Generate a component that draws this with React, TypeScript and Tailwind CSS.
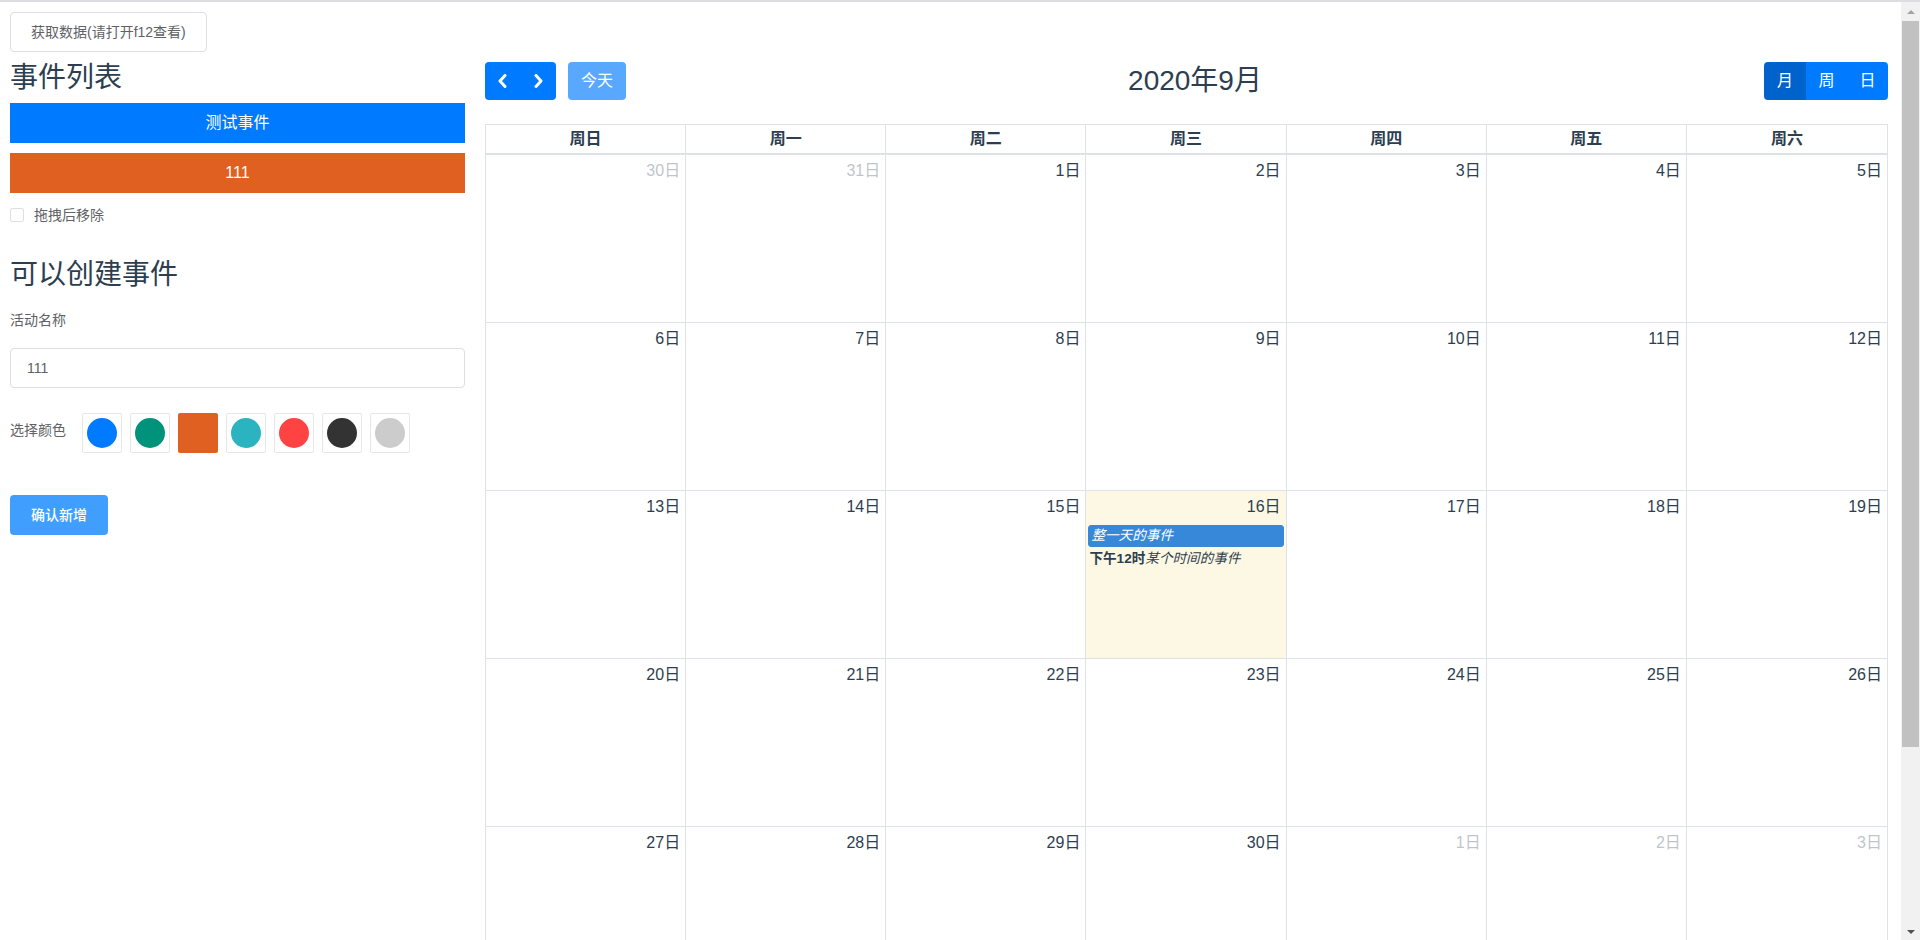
import React from "react";

type Day = { d: number; other?: boolean; today?: boolean };

const WEEKDAYS = ["周日", "周一", "周二", "周三", "周四", "周五", "周六"];

// 2020年9月 — only the weeks that fit on screen
const WEEKS: Day[][] = [
  [{ d: 30, other: true }, { d: 31, other: true }, { d: 1 }, { d: 2 }, { d: 3 }, { d: 4 }, { d: 5 }],
  [{ d: 6 }, { d: 7 }, { d: 8 }, { d: 9 }, { d: 10 }, { d: 11 }, { d: 12 }],
  [{ d: 13 }, { d: 14 }, { d: 15 }, { d: 16, today: true }, { d: 17 }, { d: 18 }, { d: 19 }],
  [{ d: 20 }, { d: 21 }, { d: 22 }, { d: 23 }, { d: 24 }, { d: 25 }, { d: 26 }],
  [{ d: 27 }, { d: 28 }, { d: 29 }, { d: 30 }, { d: 1, other: true }, { d: 2, other: true }, { d: 3, other: true }],
];

const SWATCHES = [
  { color: "#007bff" },
  { color: "#00927a" },
  { color: "#e06022", selected: true },
  { color: "#2bb3c0" },
  { color: "#ff4343" },
  { color: "#333333" },
  { color: "#cccccc" },
];

function Chevron({ dir }: { dir: "left" | "right" }) {
  return (
    <svg width="9" height="14" viewBox="0 0 9 14" fill="none">
      <polyline
        points={dir === "left" ? "7,1.5 2,7 7,12.5" : "2,1.5 7,7 2,12.5"}
        stroke="white"
        strokeWidth="3"
        strokeLinecap="round"
        strokeLinejoin="round"
      />
    </svg>
  );
}

function Sidebar() {
  return (
    <aside className="w-[455px] shrink-0">
      <h2 className="mt-[9px] mb-[8px] text-[28px] leading-[34px] font-normal">事件列表</h2>
      <div className="h-[40px] bg-[#007bff] text-center text-[16px] leading-[40px] text-white">测试事件</div>
      <div className="mt-[10px] h-[40px] bg-[#e06022] text-center text-[16px] leading-[40px] text-white">111</div>
      <label className="mt-[12px] flex h-[20px] items-center">
        <span className="h-[14px] w-[14px] rounded-[2px] border border-[#dcdfe6] bg-white" />
        <span className="ml-[10px] text-[14px] text-[#606266]">拖拽后移除</span>
      </label>

      <h2 className="mt-[33px] text-[28px] leading-[34px] font-normal">可以创建事件</h2>
      <div className="mt-[8px] h-[40px] text-[14px] leading-[40px] text-[#606266]">活动名称</div>
      <div className="mt-[8px] flex h-[40px] items-center rounded-[4px] border border-[#dcdfe6] px-[16px] text-[14px] text-[#606266]">
        111
      </div>

      <div className="mt-[25px] flex items-start">
        <span className="w-[72px] text-[14px] leading-[34px] text-[#606266]">选择颜色</span>
        <div className="flex gap-[8px]">
          {SWATCHES.map((s) =>
            s.selected ? (
              <div key={s.color} className="h-[40px] w-[40px] rounded-[2px]" style={{ backgroundColor: s.color }} />
            ) : (
              <div
                key={s.color}
                className="flex h-[40px] w-[40px] items-center justify-center rounded-[2px] border border-[#e6e6e6] bg-white"
              >
                <span className="h-[30px] w-[30px] rounded-full" style={{ backgroundColor: s.color }} />
              </div>
            )
          )}
        </div>
      </div>

      <button
        type="button"
        className="mt-[42px] h-[40px] w-[98px] rounded-[4px] bg-[#409eff] text-[14px] font-medium text-white"
      >
        确认新增
      </button>
    </aside>
  );
}

function Toolbar() {
  return (
    <div className="flex h-[38px] items-center justify-between">
      <div className="flex items-center">
        <div className="flex">
          <button type="button" className="flex h-[38px] w-[35.5px] items-center justify-center rounded-l-[4px] bg-[#007bff]">
            <Chevron dir="left" />
          </button>
          <button type="button" className="flex h-[38px] w-[35.5px] items-center justify-center rounded-r-[4px] bg-[#007bff]">
            <Chevron dir="right" />
          </button>
        </div>
        <button
          type="button"
          className="ml-[12px] h-[38px] w-[58px] rounded-[4px] bg-[#007bff] text-[16px] text-white opacity-65"
        >
          今天
        </button>
      </div>
      <h2 className="text-[28px] leading-[38px] font-normal">2020年9月</h2>
      <div className="flex overflow-hidden rounded-[4px] text-[16px] text-white">
        <button type="button" className="h-[38px] w-[42px] bg-[#0062cc]">月</button>
        <button type="button" className="h-[38px] w-[41px] bg-[#007bff]">周</button>
        <button type="button" className="h-[38px] w-[41px] bg-[#007bff]">日</button>
      </div>
    </div>
  );
}

function DayCell({ day, last }: { day: Day; last: boolean }) {
  return (
    <div className={`${last ? "" : "border-r"} border-[#dee2e6] ${day.today ? "bg-[#fcf8e3]" : ""}`}>
      <div className={`pt-[4px] pr-[5px] text-right text-[16px] leading-[24px] ${day.other ? "opacity-30" : ""}`}>
        {day.d}日
      </div>
      {day.today && (
        <div className="mt-[6px] px-[2px]">
          <div className="h-[22px] rounded-[3px] border border-[#3788d8] bg-[#3788d8] pl-[2px] text-[13.6px] leading-[20px] text-white italic">
            整一天的事件
          </div>
          <div className="mt-[2px] pl-[1px] text-[13.6px] leading-[20px]">
            <span className="font-bold">下午12时</span>
            <span className="italic">某个时间的事件</span>
          </div>
        </div>
      )}
    </div>
  );
}

function MonthGrid() {
  return (
    <div className="mt-[24px] border border-[#dee2e6]">
      <div className="grid h-[30px] grid-cols-7 border-b-2 border-[#dee2e6]">
        {WEEKDAYS.map((w, i) => (
          <div
            key={w}
            className={`${i < 6 ? "border-r" : ""} border-[#dee2e6] text-center text-[16px] leading-[28px] font-bold`}
          >
            {w}
          </div>
        ))}
      </div>
      {WEEKS.map((week, r) => (
        <div key={r} className="grid h-[168px] grid-cols-7 border-b border-[#dee2e6]">
          {week.map((day, i) => (
            <DayCell key={i} day={day} last={i === 6} />
          ))}
        </div>
      ))}
    </div>
  );
}

// page scrollbar as the browser drew it in the screenshot
function Scrollbar() {
  return (
    <div className="flex w-[19px] shrink-0 flex-col bg-[#f1f1f1]">
      <div className="flex h-[19px] items-center justify-center">
        <span className="h-0 w-0 border-x-[4px] border-b-[4px] border-x-transparent border-b-[#a3a3a3]" />
      </div>
      <div className="mx-[1px] h-[726px] bg-[#c1c1c1]" />
      <div className="flex-1" />
      <div className="flex h-[17px] items-center justify-center">
        <span className="h-0 w-0 border-x-[4px] border-t-[4px] border-x-transparent border-t-[#505050]" />
      </div>
    </div>
  );
}

export default function App() {
  return (
    <div className="flex h-screen flex-col overflow-hidden bg-white font-['Liberation_Sans','Noto_Sans_CJK_SC',sans-serif] text-[#2c3e50]">
      <div className="h-[2px] shrink-0 bg-[#dcdde1]" />
      <div className="flex min-h-0 flex-1">
        <div className="min-w-0 flex-1 overflow-hidden pl-[10px] pr-[13px]">
          <button
            type="button"
            className="mt-[10px] h-[40px] rounded-[4px] border border-[#dcdfe6] bg-white px-[20px] text-[14px] text-[#606266]"
          >
            获取数据(请打开f12查看)
          </button>
          <div className="flex">
            <Sidebar />
            <main className="ml-[20px] min-w-0 flex-1 pt-[10px]">
              <Toolbar />
              <MonthGrid />
            </main>
          </div>
        </div>
        <Scrollbar />
      </div>
    </div>
  );
}
